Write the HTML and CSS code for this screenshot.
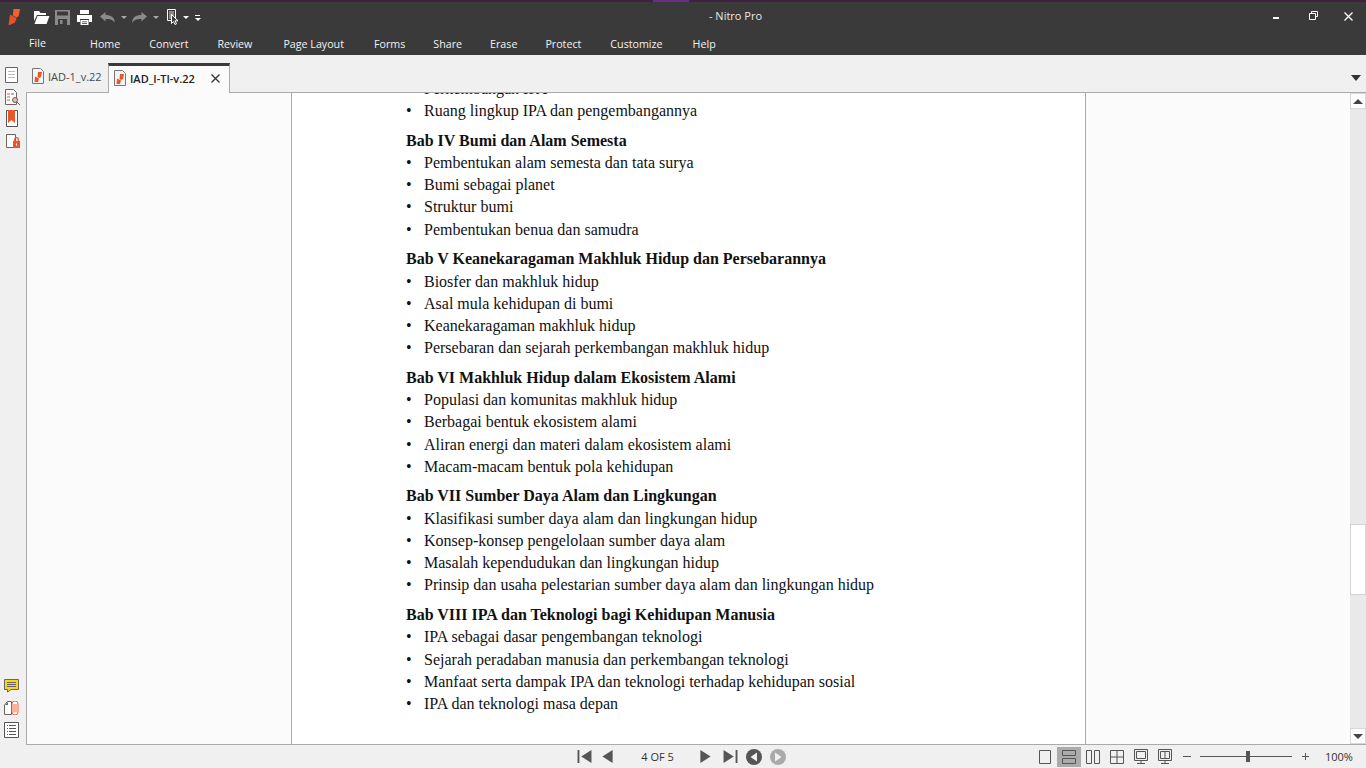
FILE: index.html
```html
<!DOCTYPE html>
<html lang="id">
<head>
<meta charset="utf-8">
<title>Nitro Pro</title>
<link rel="stylesheet" href="styles.css">
</head>
<body>
<div class="app">
  <header class="chrome">
    <div class="accent"><span class="accent-hi"></span></div>
    <div class="titlebar">
      <div class="qat">
        <svg class="logo" width="12" height="16" viewBox="0 0 12 16"><path fill="#f0622f" d="M5.500 0H12l-1.300 7-1.700 1.500-4.200-2z"/><path fill="#e8502a" d="M2 5.500 8.700 9 7 13.500 2 16H0.500z"/></svg>
        <svg class="qi open" width="17" height="13" viewBox="0 0 17 13"><path fill="#fff" d="M1 0h5l1.500 2H13v2H4L1 10zM4.500 5H16.500L13.500 13H1.500z"/></svg>
        <svg class="qi save" width="15" height="15" viewBox="0 0 15 15"><path fill="#8a8a8a" d="M0 0h15v15H0z"/><path fill="#3a3a3a" d="M2 1.500h11v4H2zM3 9h9v6H3z"/><path fill="#8a8a8a" d="M3 7h9v1H3zM5 10h2.500v4H5z"/></svg>
        <svg class="qi print" width="15" height="15" viewBox="0 0 15 15"><path fill="#fff" d="M3 0h9v4H3zM0 5h15v7h-3V9H3v3H0z"/><path fill="#fff" d="M3.500 10h8v5h-8z"/><path fill="#3a3a3a" d="M5 11.500h5v.8H5zM5 13h5v.8H5z"/></svg>
        <svg class="qi undo" width="15" height="11" viewBox="0 0 15 11"><path fill="#8a8a8a" d="M0 4.500 5.500 0v3C11 3 14.500 5 15 11c-2-3.500-5-4-9.500-4v2.500z"/></svg>
        <span class="caret dim c1"></span>
        <svg class="qi redo" width="15" height="11" viewBox="0 0 15 11"><path fill="#8a8a8a" d="M15 4.500 9.500 0v3C4 3 .5 5 0 11c2-3.500 5-4 9.500-4v2.500z"/></svg>
        <span class="caret dim c1"></span>
        <svg class="qi select" width="13" height="16" viewBox="0 0 13 16"><path fill="none" stroke="#fff" d="M.5.500h8v11h-8z"/><path fill="#8a8a8a" d="M2 2h5v8H2z"/><path fill="#3a3a3a" stroke="#fff" d="M4.500 5.500v9l2-2 1.500 3 1.500-.7-1.500-3H11z"/></svg>
        <span class="caret"></span>
        <span class="more"></span>
      </div>
      <div class="title">- Nitro Pro</div>
      <div class="winctl">
        <svg class="w-min" width="6" height="2" viewBox="0 0 6 2"><path fill="#fff" d="M0 0h6v2H0z"/></svg>
        <svg class="w-max" width="9" height="9" viewBox="0 0 9 9"><path fill="none" stroke="#fff" d="M2.500 2V.5h6v5H7M.5 2.500h6v6h-6z"/></svg>
        <svg class="w-close" width="9" height="9" viewBox="0 0 9 9"><path fill="none" stroke="#fff" stroke-width="1.300" d="M.5.500l8 8M8.500.500l-8 8"/></svg>
      </div>
    </div>
    <nav class="menu">
      <span class="file">File</span>
      <span>Home</span><span>Convert</span><span>Review</span><span class="nudge-2">Page Layout</span><span class="nudge-1">Forms</span><span class="pull-1">Share</span><span class="pull-1">Erase</span><span class="pull-1">Protect</span><span>Customize</span><span class="nudge-1">Help</span>
    </nav>
  </header>

  <div class="middle">
    <aside class="rail">
      <div class="rail-group top">
        <svg class="r1" width="13" height="16" viewBox="0 0 13 16"><path fill="#fff" stroke="#666" d="M.5.500h12v15H.5z"/><path stroke="#bbb" d="M3 4.500h7M3 7.500h7M3 10.500h7"/></svg>
        <svg class="r2" width="16" height="17" viewBox="0 0 16 17"><path fill="#fff" stroke="#666" d="M.5.500h8l3 3v12H.5z"/><path stroke="#e8562a" d="M2 5h3M2 8h3M2 11h3"/><path stroke="#666" d="M6 5h3"/><circle cx="10" cy="11" r="2.500" fill="#f3b9a3" stroke="#666"/><path stroke="#666" d="M12 13l3 3"/></svg>
        <svg class="r3" width="12" height="17" viewBox="0 0 12 17"><path fill="#fff" stroke="#555" d="M.5.500h11v16H.5z"/><path fill="#e8562a" d="M2 0h7v13l-3.500-3L2 13z"/></svg>
        <svg class="r4" width="15" height="15" viewBox="0 0 15 15"><path fill="#fff" stroke="#666" d="M.5.500h9v13H.5z"/><path fill="#e8562a" d="M7 7h7v7H7z"/><path fill="none" stroke="#e8562a" stroke-width="1.300" d="M8.700 7V5.500a1.800 1.800 0 0 1 3.600 0V7"/><path fill="#fff" d="M10 9.500h1v2h-1z"/></svg>
      </div>
      <div class="rail-group low">
        <svg class="l1" width="15" height="14" viewBox="0 0 15 14"><path fill="#ffd21a" stroke="#666" d="M.5.500h14v10H7L3.500 13v-2.500h-3z"/><path stroke="#666" d="M3 3.500h9M3 5.500h9M3 7.500h9"/></svg>
        <svg class="l2" width="15" height="14" viewBox="0 0 15 14"><path fill="#fff" stroke="#666" d="M3.500.500h4v13h-7V4z"/><path fill="#666" d="M1 4l3-3v3z"/><path fill="#fff" stroke="#f0663a" d="M8 3a3 3 0 0 1 6 0v8a3 3 0 0 1-6 0zM10 3v8.500M12 3v8"/></svg>
        <svg width="15" height="16" viewBox="0 0 15 16"><path fill="#fff" stroke="#555" d="M.5.500h14v15H.5z"/><path stroke="#555" d="M3 3.500h1M5 3.500h7M3 6.500h1M5 6.500h7M3 9.500h1M5 9.500h7M3 12.500h1M5 12.500h7"/></svg>
      </div>
    </aside>

    <div class="content">
      <div class="tabbar">
        <div class="tab">
          <svg class="fileicon" width="12" height="16" viewBox="0 0 12 16"><path fill="#f4f4f4" stroke="#777" d="M.5.500h8l3 3v12H.5z"/><path fill="#e8562a" d="M6 4h4L9 9l-2 1-1.500-1zM3 8.500l4 2L6 14H2.500z"/></svg>
          <span>IAD-1_v.22</span>
        </div>
        <div class="tab active">
          <svg class="fileicon" width="12" height="16" viewBox="0 0 12 16"><path fill="#f4f4f4" stroke="#777" d="M.5.500h8l3 3v12H.5z"/><path fill="#e8562a" d="M6 4h4L9 9l-2 1-1.500-1zM3 8.500l4 2L6 14H2.500z"/></svg>
          <span class="tabname">IAD_I-TI-v.22</span>
          <svg width="9" height="9" viewBox="0 0 9 9"><path fill="none" stroke="#333" stroke-width="1.300" d="M.5.500l8 8M8.500.500l-8 8"/></svg>
        </div>
        <span class="tabmenu"></span>
      </div>

      <main class="workspace">
        <section class="viewer">
          <article class="page">
            <div class="doc">
              <ul class="group">
                <li>Perkembangan IPA</li>
                <li>Ruang lingkup IPA dan pengembangannya</li>
              </ul>
              <h2>Bab IV Bumi dan Alam Semesta</h2>
              <ul class="group">
                <li>Pembentukan alam semesta dan tata surya</li>
                <li>Bumi sebagai planet</li>
                <li>Struktur bumi</li>
                <li>Pembentukan benua dan samudra</li>
              </ul>
              <h2>Bab V Keanekaragaman Makhluk Hidup dan Persebarannya</h2>
              <ul class="group">
                <li>Biosfer dan makhluk hidup</li>
                <li>Asal mula kehidupan di bumi</li>
                <li>Keanekaragaman makhluk hidup</li>
                <li>Persebaran dan sejarah perkembangan makhluk hidup</li>
              </ul>
              <h2>Bab VI Makhluk Hidup dalam Ekosistem Alami</h2>
              <ul class="group">
                <li>Populasi dan komunitas makhluk hidup</li>
                <li>Berbagai bentuk ekosistem alami</li>
                <li>Aliran energi dan materi dalam ekosistem alami</li>
                <li>Macam-macam bentuk pola kehidupan</li>
              </ul>
              <h2>Bab VII Sumber Daya Alam dan Lingkungan</h2>
              <ul class="group">
                <li>Klasifikasi sumber daya alam dan lingkungan hidup</li>
                <li>Konsep-konsep pengelolaan sumber daya alam</li>
                <li>Masalah kependudukan dan lingkungan hidup</li>
                <li>Prinsip dan usaha pelestarian sumber daya alam dan lingkungan hidup</li>
              </ul>
              <h2>Bab VIII IPA dan Teknologi bagi Kehidupan Manusia</h2>
              <ul class="group">
                <li>IPA sebagai dasar pengembangan teknologi</li>
                <li>Sejarah peradaban manusia dan perkembangan teknologi</li>
                <li>Manfaat serta dampak IPA dan teknologi terhadap kehidupan sosial</li>
                <li>IPA dan teknologi masa depan</li>
              </ul>
            </div>
          </article>
        </section>

        <div class="scrollbar">
          <div class="sb-btn"><span class="tri up"></span></div>
          <div class="sb-track"><div class="sb-thumb"></div></div>
          <div class="sb-btn"><span class="tri down"></span></div>
        </div>
      </main>
    </div>
  </div>

  <footer class="status">
    <div class="pager">
      <svg width="17" height="13" viewBox="0 0 17 14"><path fill="#555" d="M1 0h2v14H1zM16 0v14L5 7z"/></svg>
      <svg class="prev" width="11" height="13" viewBox="0 0 11 14"><path fill="#555" d="M11 0v14L0 7z"/></svg>
      <span class="pageno">4 OF 5</span>
      <svg class="next" width="11" height="13" viewBox="0 0 11 14"><path fill="#555" d="M0 0v14l11-7z"/></svg>
      <svg class="last" width="17" height="13" viewBox="0 0 17 14"><path fill="#555" d="M16 0h-2v14h2zM1 0v14l11-7z"/></svg>
      <svg class="back" width="16" height="16" viewBox="0 0 16 16"><circle cx="8" cy="8" r="8" fill="#555"/><path fill="#f0f0f0" d="M11 3.500v9L4.500 8z"/></svg>
      <svg class="fwd" width="16" height="16" viewBox="0 0 16 16"><circle cx="8" cy="8" r="8" fill="#aaa"/><path fill="#f0f0f0" d="M5 3.500v9L11.500 8z"/></svg>
    </div>
    <div class="viewtools">
      <span class="vt"><svg width="12" height="14" viewBox="0 0 12 14"><path fill="none" stroke="#555" d="M.5.500h11v13H.5z"/></svg></span>
      <span class="vt on"><svg width="14" height="14" viewBox="0 0 14 14"><path fill="none" stroke="#555" d="M.5.500h13v5H.5zM.5 8.500h13v5H.5z"/></svg></span>
      <span class="vt"><svg width="14" height="14" viewBox="0 0 14 14"><path fill="none" stroke="#555" d="M.5.500h5v13h-5zM8.500.500h5v13h-5z"/></svg></span>
      <span class="vt"><svg width="14" height="14" viewBox="0 0 14 14"><path fill="none" stroke="#555" d="M.5.500h13v13H.5zM7 .5v13M.5 7h13"/></svg></span>
      <span class="vt"><svg width="14" height="15" viewBox="0 0 14 15"><path fill="none" stroke="#555" d="M.5.500h13v11H.5zM2.500 2.500h9v7h-9zM7 11.500v3M3 14.500h8"/></svg></span>
      <span class="vt"><svg width="14" height="15" viewBox="0 0 14 15"><path fill="none" stroke="#555" d="M.5.500h13v11H.5zM2.500 2.500h9v7h-9zM7 2.500v7M7 11.500v3M3 14.500h8"/></svg></span>
      <span class="zoom-minus"></span>
      <div class="slider"><span class="knob"></span></div>
      <span class="zoom-plus"></span>
      <span class="pct">100%</span>
    </div>
  </footer>
</div>
</body>
</html>
```
FILE: styles.css
```css
* { box-sizing: border-box; }
html, body { margin: 0; height: 100%; overflow: hidden; }
body { font-family: "Open Sans", "Noto Sans", sans-serif; background: #f0f0f0; }
svg { display: block; flex: none; }
.app { width: 1366px; height: 768px; display: flex; flex-direction: column; }

.chrome { height: 55px; background: #3a3a3a; color: #fff; flex: none; }
.accent { height: 2px; background: #3e2240; display: flex; padding-left: 653px; }
.accent-hi { width: 36px; background: #6a2e86; }
.titlebar { height: 28px; display: flex; align-items: center; position: relative; padding-left: 8px; }
.qat { display: flex; align-items: center; padding-top: 2px; }
.logo { margin-right: 13px; }
.open { margin-right: 5px; }
.save { margin-right: 7px; }
.print { margin-right: 8px; }
.redo { margin-left: 5px; }
.select { margin-left: 8px; }
.caret { width: 0; height: 0; border: 3px solid transparent; border-top: 3px solid #fff; border-bottom: 0; margin-left: 3px; }
.caret.dim { border-top-color: #a8a8a8; }
.caret.c1 { margin-left: 6px; }
.more { width: 5px; height: 5px; margin-left: 6px; border-top: 1px solid #fff; }
.more::after { content: ""; display: block; width: 0; height: 0; border: 3px solid transparent; border-top: 3px solid #fff; border-bottom: 0; margin: 2px 0 0 -.5px; }
.title { position: absolute; left: 0; right: 0; top: 6px; padding-left: 105px; text-align: center; font-size: 11px; line-height: 16px; color: #e8e8e8; }
.winctl { margin-left: auto; display: flex; align-items: flex-start; align-self: flex-start; padding-right: 13px; }
.w-min { margin-top: 15px; }
.w-max { margin: 9px 0 0 30px; }
.w-close { margin: 10px 0 0 26px; }
.menu { height: 25px; display: flex; align-items: center; gap: 29px; font-size: 10.7px; padding-left: 90px; padding-top: 3px; color: #f2f2f2; position: relative; }
.nudge-2 { margin-left: 2px; }
.nudge-1 { margin-left: 1px; }
.pull-1 { margin-left: -1px; }
.file { position: absolute; left: 29px; top: 5px; line-height: 16px; }

.middle { height: 690px; flex: none; display: flex; }
.rail { width: 26px; flex: none; display: flex; flex-direction: column; justify-content: space-between; padding: 12px 0 7px 4px; }
.rail-group { display: flex; flex-direction: column; align-items: flex-start; }
.rail-group.top { padding-left: 1px; }
.r2 { margin-top: 6px; }
.r3 { margin: 4px 0 0 1px; }
.r4 { margin: 7px 0 0 1px; }
.l2 { margin-top: 8px; }
.l2 + svg { margin-top: 7px; }
.content { flex: 1; display: flex; flex-direction: column; min-width: 0; }

.tabbar { height: 38px; flex: none; display: flex; align-items: flex-end; background: #f0f0f0; border-bottom: 1px solid #aaa; padding-left: 1px; position: relative; }
.tab { height: 29px; width: 81px; display: flex; align-items: center; gap: 4px; padding-left: 5px; padding-bottom: 3px; font-size: 11px; color: #4a4a4a; }
.tab.active { width: 122px; height: 30px; margin-bottom: -1px; background: #fbfbfb; border-top: 3px solid #3a3a3a; border-left: 1px solid #aaa; border-right: 1px solid #aaa; color: #222; }
.tabname { font-weight: 600; width: 77px; white-space: nowrap; }
.tabmenu { position: absolute; right: 5px; top: 20px; width: 0; height: 0; border: 5px solid transparent; border-top: 6px solid #333; border-bottom: 0; }

.workspace { flex: 1; display: flex; min-height: 0; }
.viewer { flex: 1; background: #fbfbfb; overflow: hidden; padding-left: 264px; border-left: 1px solid #aaa; border-bottom: 1px solid #aaa; }
.page { width: 795px; height: 100%; background: #fff; border-left: 1px solid #aaa; border-right: 1px solid #aaa; overflow: hidden; }
.doc { margin-top: -15.2px; padding-left: 114px; font-family: "Liberation Serif", "Times New Roman", serif; font-size: 16px; line-height: 22.25px; color: #111; }
.group { list-style: none; margin: 0 0 7.35px; padding: 0; }
.group li { padding-left: 18px; position: relative; white-space: nowrap; }
.group li::before { content: "•"; position: absolute; left: 0; top: 0; }
h2 { margin: 0; font-size: 16px; font-weight: 700; line-height: 22.25px; white-space: nowrap; }

.scrollbar { width: 16px; flex: none; background: #e9e9e9; display: flex; flex-direction: column; border-bottom: 1px solid #aaa; }
.sb-btn { height: 16px; flex: none; background: #fdfdfd; border: 1px solid #d8d8d8; display: flex; align-items: center; justify-content: center; }
.sb-track { flex: 1; padding-top: 415px; }
.sb-thumb { height: 71px; background: #fff; border: 1px solid #d4d4d4; }
.tri { width: 0; height: 0; border: 5px solid transparent; }
.tri.up { border-bottom: 5px solid #444; border-top: 0; }
.tri.down { border-top: 5px solid #444; border-bottom: 0; }

.status { height: 23px; flex: none; background: #f0f0f0; display: flex; align-items: center; }
.pager { display: flex; align-items: center; padding-left: 576px; }
.prev { margin-left: 9px; }
.pageno { width: 87px; text-align: center; font-size: 11px; color: #333; padding-left: 2px; }
.last { margin-left: 11px; }
.back { margin-left: 7px; }
.fwd { margin-left: 8px; }
.viewtools { margin-left: auto; display: flex; align-items: center; padding-right: 14px; }
.vt { width: 24px; height: 20px; display: flex; align-items: center; justify-content: center; }
.vt.on { background: #ababab; }
.zoom-minus { width: 8px; height: 1px; background: #555; margin: 0 9px 0 6px; }
.slider { width: 92px; height: 1px; background: #555; margin-right: 10px; position: relative; }
.knob { position: absolute; left: 46px; top: -5px; width: 4px; height: 11px; background: #555; }
.zoom-plus { width: 7px; height: 7px; margin-right: 16px; background: linear-gradient(#555,#555) center/100% 1px no-repeat, linear-gradient(#555,#555) center/1px 100% no-repeat; }
.pct { font-size: 11px; color: #333; width: 27px; white-space: nowrap; }
```
